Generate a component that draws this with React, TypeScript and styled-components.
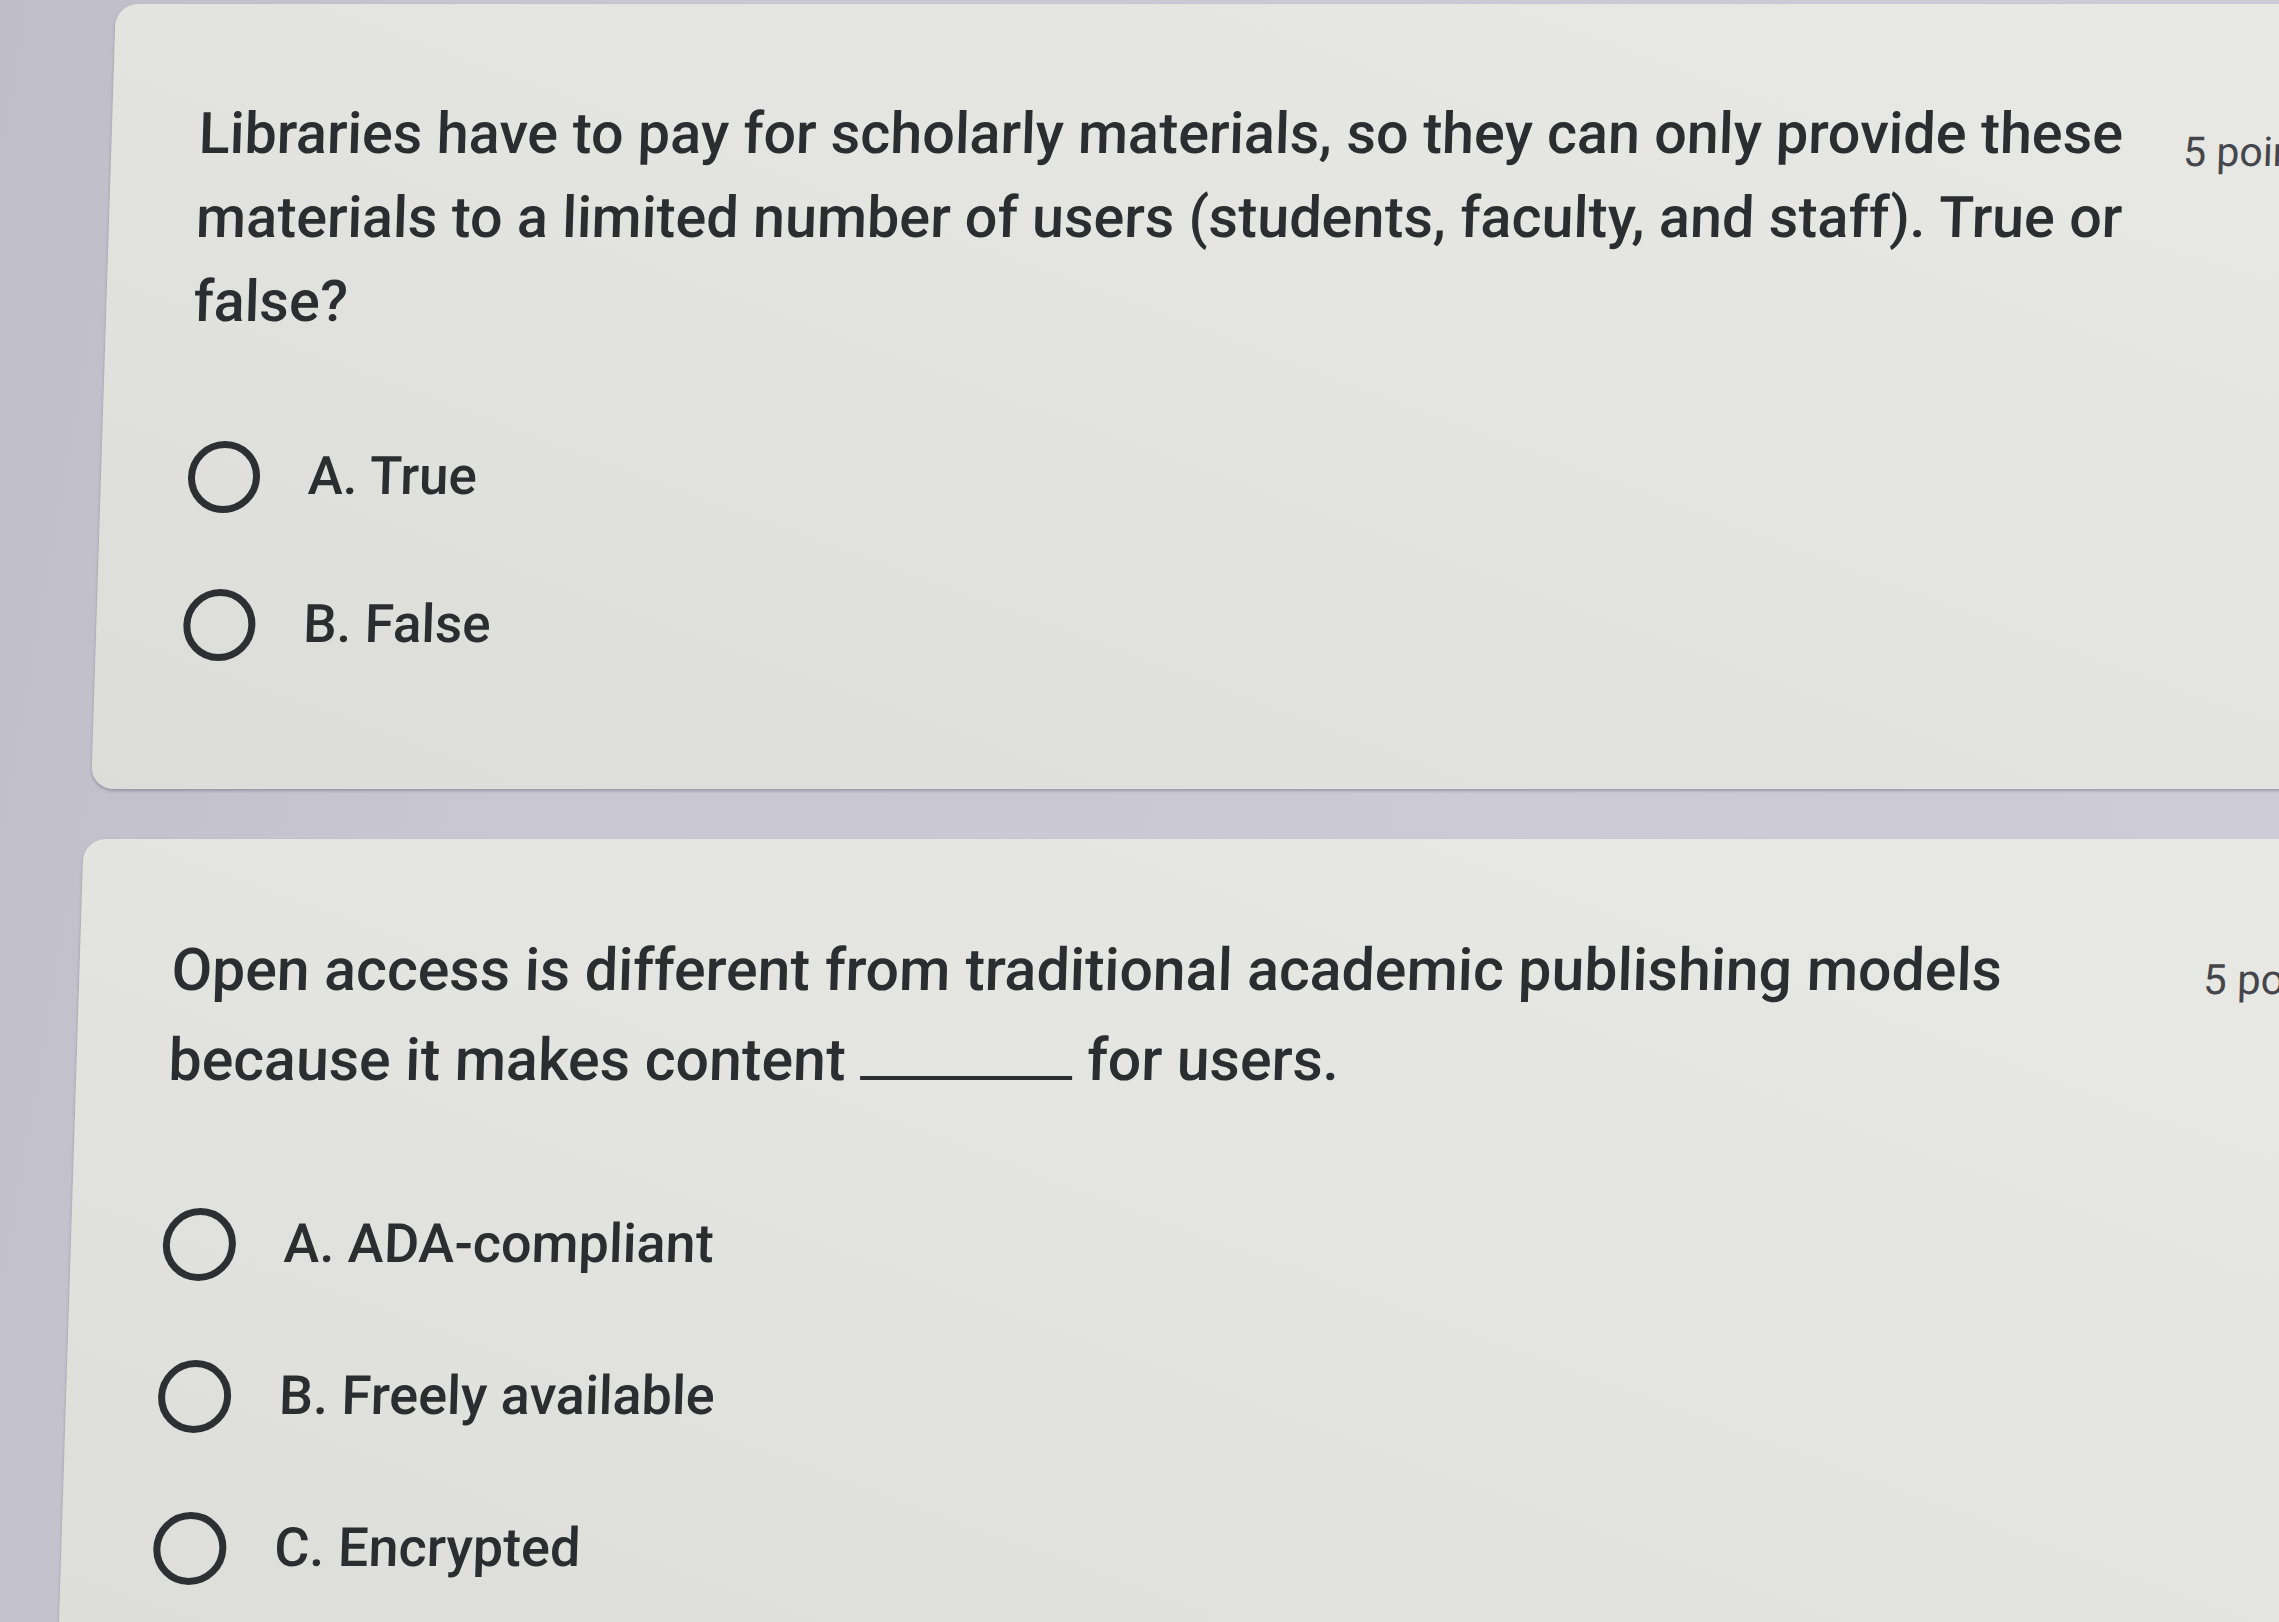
import React from "react";
import styled, { createGlobalStyle } from "styled-components";

const GlobalStyle = createGlobalStyle`
  html, body {
    margin: 0;
    padding: 0;
  }
  body {
    width: 2279px;
    height: 1622px;
    overflow: hidden;
    background: linear-gradient(100deg, #bebdc8 0%, #c8c7d2 25%, #cecdd7 100%);
    font-family: Roboto, "Liberation Sans", Arial, sans-serif;
    color: #27282c;
  }
`;

/* The photo is taken at a slight angle: a small skew mimics it. */
const Page = styled.main`
  height: 1622px;
  padding-top: 4px;
  box-sizing: border-box;
  display: flex;
  flex-direction: column;
  gap: 50px;
  transform: skewX(-1.8deg);
  transform-origin: 0 0;
`;

const Card = styled.section<{ $left: number; $pad: number; $top: number; $bottom: number }>`
  margin-left: ${(p) => p.$left}px;
  width: 2300px;
  flex-shrink: 0;
  box-sizing: border-box;
  padding: ${(p) => p.$top}px 0 ${(p) => p.$bottom}px ${(p) => p.$pad}px;
  border-radius: 22px;
  background: linear-gradient(200deg, #e8e9e5 0%, #e4e5e0 45%, #dcddd8 100%);
  box-shadow: 0 2px 3px rgba(70, 70, 82, 0.35);
`;

const Header = styled.div`
  display: flex;
  align-items: flex-start;
`;

const Title = styled.div<{ $width: number; $fs: number; $lh: number }>`
  width: ${(p) => p.$width}px;
  flex-shrink: 0;
  font-size: ${(p) => p.$fs}px;
  line-height: ${(p) => p.$lh}px;
  font-weight: 500;
  color: #2c2d31;
`;

const Points = styled.div<{ $gap: number; $fs: number; $lh: number; $shift: number }>`
  margin-left: ${(p) => p.$gap}px;
  margin-top: ${(p) => p.$shift}px;
  font-size: ${(p) => p.$fs}px;
  line-height: ${(p) => p.$lh}px;
  font-weight: 400;
  color: #45464b;
  white-space: nowrap;
`;

const Blank = styled.span`
  display: inline-block;
  width: 212px;
  height: 0;
  border-bottom: 4px solid #2c2d31;
`;

const Options = styled.div<{ $gap: number }>`
  display: flex;
  flex-direction: column;
  margin-top: ${(p) => p.$gap}px;
`;

const Option = styled.label<{ $h: number; $fs: number }>`
  display: flex;
  align-items: center;
  gap: 48px;
  height: ${(p) => p.$h}px;
  font-size: ${(p) => p.$fs}px;
  line-height: 1.2;
  font-weight: 500;
  color: #2c2d31;
`;

const Radio = styled.span<{ $size: number }>`
  width: ${(p) => p.$size}px;
  height: ${(p) => p.$size}px;
  box-sizing: border-box;
  border: 7px solid #2e2f33;
  border-radius: 50%;
  flex-shrink: 0;
`;

type Q = {
  left: number;
  pad: number;
  top: number;
  bottom: number;
  title: React.ReactNode;
  width: number;
  fs: number;
  lh: number;
  ptsGap: number;
  ptsFs: number;
  ptsShift: number;
  optGap: number;
  rowH: number;
  optFs: number;
  radio: number;
  options: string[];
};

const questions: Q[] = [
  {
    left: 116,
    pad: 87,
    top: 88,
    bottom: 90,
    title:
      "Libraries have to pay for scholarly materials, so they can only provide these materials to a limited number of users (students, faculty, and staff). True or false?",
    width: 1958,
    fs: 57.5,
    lh: 84,
    ptsGap: 27,
    ptsFs: 41,
    ptsShift: 18,
    optGap: 59,
    rowH: 148,
    optFs: 53,
    radio: 72,
    options: ["A. True", "B. False"],
  },
  {
    left: 110,
    pad: 92,
    top: 86,
    bottom: 120,
    title: (
      <>
        Open access is different from traditional academic publishing models
        because it makes content <Blank /> for users.
      </>
    ),
    width: 1900,
    fs: 59,
    lh: 90,
    ptsGap: 132,
    ptsFs: 42,
    ptsShift: 10,
    optGap: 63,
    rowH: 152,
    optFs: 54,
    radio: 73,
    options: ["A. ADA-compliant", "B. Freely available", "C. Encrypted"],
  },
];

export default function App() {
  return (
    <>
      <GlobalStyle />
      <Page>
        {questions.map((q, i) => (
          <Card key={i} $left={q.left} $pad={q.pad} $top={q.top} $bottom={q.bottom}>
            <Header>
              <Title $width={q.width} $fs={q.fs} $lh={q.lh}>
                {q.title}
              </Title>
              <Points $gap={q.ptsGap} $fs={q.ptsFs} $lh={q.lh} $shift={q.ptsShift}>
                5 points
              </Points>
            </Header>
            <Options $gap={q.optGap}>
              {q.options.map((o) => (
                <Option key={o} $h={q.rowH} $fs={q.optFs}>
                  <Radio $size={q.radio} />
                  <span>{o}</span>
                </Option>
              ))}
            </Options>
          </Card>
        ))}
      </Page>
    </>
  );
}
